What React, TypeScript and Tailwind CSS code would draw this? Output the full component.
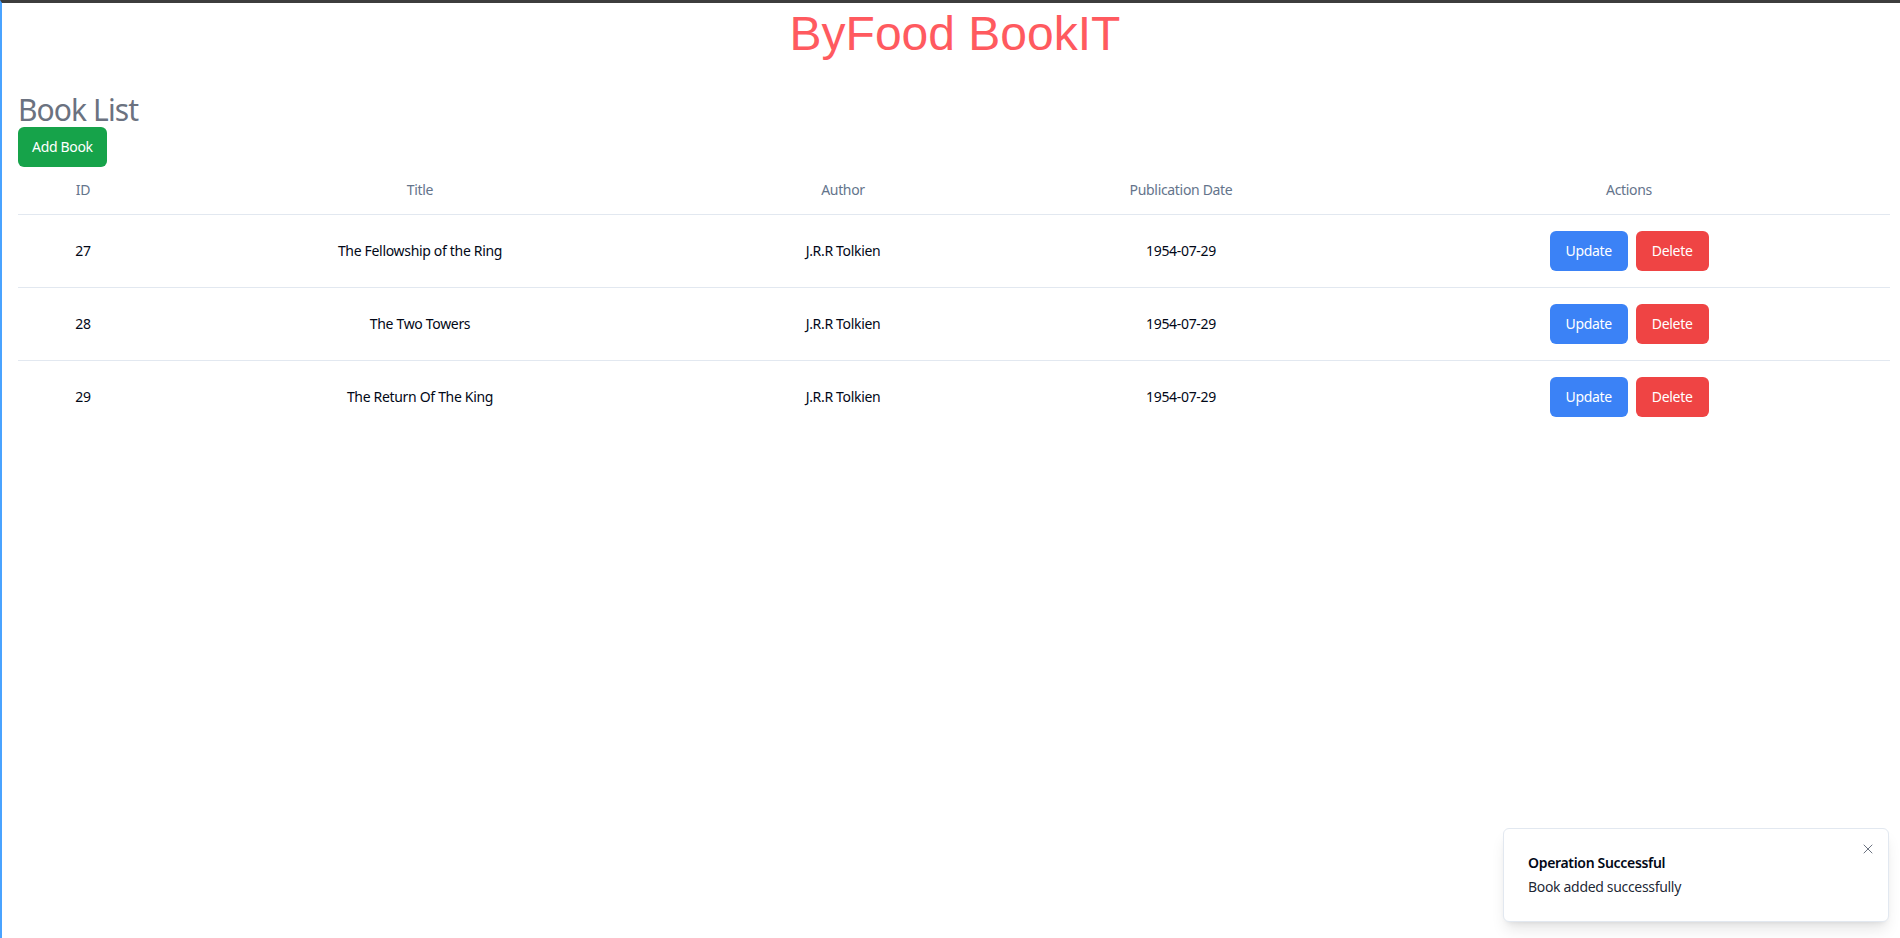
import { X } from 'lucide-react';

type Book = {
  id: number;
  title: string;
  author: string;
  publicationDate: string;
};

const books: Book[] = [
  { id: 27, title: 'The Fellowship of the Ring', author: 'J.R.R Tolkien', publicationDate: '1954-07-29' },
  { id: 28, title: 'The Two Towers', author: 'J.R.R Tolkien', publicationDate: '1954-07-29' },
  { id: 29, title: 'The Return Of The King', author: 'J.R.R Tolkien', publicationDate: '1954-07-29' },
];

export default function App() {
  return (
    <div className="relative h-screen overflow-hidden bg-white border-t-[3px] border-t-[#3d3d3d] border-l-2 border-l-[#4aa3ff] font-['Noto_Sans',sans-serif] tracking-[-0.02em]">
      <h1 className="pt-[7px] pl-2 text-center text-5xl leading-[48px] tracking-normal text-[#ff5a5f] font-['Liberation_Sans',Arial,sans-serif]">
        ByFood BookIT
      </h1>

      <div className="pl-4 pr-[10px] pt-[34px]">
        <h2 className="text-3xl leading-[35px] tracking-[-0.03em] text-[#6b7280]">Book List</h2>
        <button className="h-10 px-3.5 rounded-md bg-[#16a34a] text-sm text-white">
          Add Book
        </button>

        <table className="w-full text-sm">
          <thead>
            <tr className="border-b border-[#e2e8f0]">
              <th className="h-[47px] w-[130px] font-normal text-[#64748b]">ID</th>
              <th className="h-[47px] w-[544px] font-normal text-[#64748b]">Title</th>
              <th className="h-[47px] w-[302px] font-normal text-[#64748b]">Author</th>
              <th className="h-[47px] w-[374px] font-normal text-[#64748b]">Publication Date</th>
              <th className="h-[47px] font-normal text-[#64748b]">Actions</th>
            </tr>
          </thead>
          <tbody>
            {books.map((book, i) => (
              <tr key={book.id} className={i < books.length - 1 ? 'border-b border-[#e2e8f0]' : ''}>
                <td className="py-4 text-center text-[#020817]">{book.id}</td>
                <td className="py-4 text-center text-[#020817]">{book.title}</td>
                <td className="py-4 text-center text-[#020817]">{book.author}</td>
                <td className="py-4 text-center text-[#020817]">{book.publicationDate}</td>
                <td className="py-4">
                  <div className="flex justify-center gap-2">
                    <button className="h-10 px-4 rounded-md bg-[#3b82f6] text-white">Update</button>
                    <button className="h-10 px-4 rounded-md bg-[#ef4444] text-white">Delete</button>
                  </div>
                </td>
              </tr>
            ))}
          </tbody>
        </table>
      </div>

      <div className="absolute right-[11px] bottom-[16px] w-[386px] rounded-md border border-[#e2e8f0] bg-white p-6 pr-8 shadow-lg">
        <div className="text-sm font-semibold text-[#020817]">Operation Successful</div>
        <div className="mt-1 text-sm text-[#020817]/90">Book added successfully</div>
        <button className="absolute right-2 top-2 rounded-md p-1 text-[#6b7280]">
          <X className="h-4 w-4" strokeWidth={1.5} />
        </button>
      </div>
    </div>
  );
}
